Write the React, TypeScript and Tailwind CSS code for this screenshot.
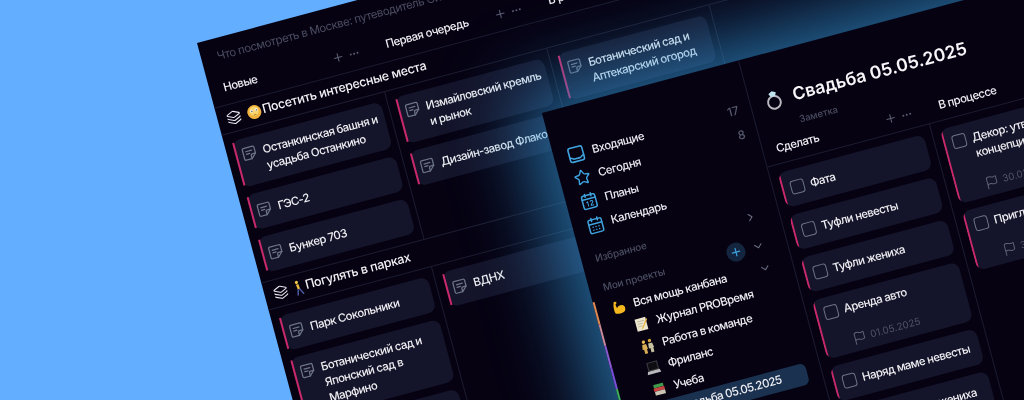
import React from "react";
import { CalendarDays, ChevronDown, ChevronRight, Ellipsis, Flag, Layers, Plus, Star } from "lucide-react";

const Note = () => (
  <svg width="16" height="16" viewBox="0 0 24 24" fill="none" stroke="#6d7488" strokeWidth="1.900" strokeLinecap="round" strokeLinejoin="round" className="shrink-0">
    <path d="M14 21H5a2 2 0 0 1-2-2V5a2 2 0 0 1 2-2h14a2 2 0 0 1 2 2v9l-7 7Z" />
    <path d="M14 21v-5a2 2 0 0 1 2-2h5" />
    <path d="M7.500 8.500h9M7.500 12.500h5" />
  </svg>
);

const Inbox = () => (
  <svg width="19" height="19" viewBox="0 0 24 24" fill="none" stroke="#3ea3de" strokeWidth="2" strokeLinecap="round" strokeLinejoin="round" className="shrink-0">
    <rect x="3" y="3" width="18" height="18" rx="2.500" />
    <path d="M3 15c3 0 3.500 2.500 5.500 2.500h7c2 0 2.500-2.500 5.500-2.500" />
  </svg>
);

const Cal12 = () => (
  <svg width="18" height="18" viewBox="0 0 24 24" fill="none" stroke="#3ea3de" strokeWidth="2" strokeLinecap="round" strokeLinejoin="round" className="shrink-0">
    <rect x="3" y="4" width="18" height="18" rx="2.500" />
    <path d="M8 2v4M16 2v4M3 9h18" />
    <path d="M8 13.500l1.500-1v6M13 13c1-1.200 3.500-.8 3.500 1 0 1.500-3.500 2.500-3.500 4.500h3.500" strokeWidth="1.300" />
  </svg>
);

const Face = () => (
  <svg width="15" height="15" viewBox="0 0 16 16" className="shrink-0">
    <circle cx="8" cy="8" r="7.500" fill="#f0b23c" />
    <circle cx="8" cy="7" r="5" fill="#f8d469" />
    <circle cx="5.500" cy="6.500" r="1.700" fill="#f6efe0" />
    <circle cx="10.500" cy="6" r="1.700" fill="#f6efe0" />
    <circle cx="5.700" cy="6.800" r=".7" fill="#544" />
    <circle cx="10.700" cy="6.300" r=".7" fill="#544" />
    <path d="M6.500 11h3" stroke="#a9722a" strokeWidth="1" />
  </svg>
);

const Walker = () => (
  <svg width="11" height="16" viewBox="0 0 11 16" className="shrink-0">
    <circle cx="4" cy="2" r="1.600" fill="#f2c84e" />
    <path d="M3 4h2.500l.5 5H3.500z" fill="#e8b93d" />
    <path d="M4 9 2.500 15M5.500 9 8.500 15" stroke="#4a5a9c" strokeWidth="1.500" />
  </svg>
);

const Muscle = () => (
  <svg width="14" height="15" viewBox="0 0 14 15" className="shrink-0">
    <path d="M3.500 1 6 1.500 5.500 3.500 4.500 3.800 5 8c1.500-2 4.500-2.500 6.500-1.500 2 1 2 4.500.5 6-2 1.500-6.500 1.500-9.500.5C1.500 11 1.500 5 3.500 1Z" fill="#f2b81e" />
  </svg>
);

const Memo = () => (
  <svg width="14" height="15" viewBox="0 0 14 15" className="shrink-0">
    <rect x="1" y="1.500" width="11" height="12.500" fill="#ece6cf" />
    <path d="M3 4.500h7M3 7h5M3 9.500h4" stroke="#b8b29c" strokeWidth=".8" />
    <path d="M12.500 3 6.500 11l-1 2 2-1.200L13.500 4z" fill="#e2b53c" />
  </svg>
);

const People = () => (
  <svg width="14" height="15" viewBox="0 0 14 15" className="shrink-0">
    <circle cx="3.800" cy="2.500" r="1.700" fill="#e8b94e" />
    <circle cx="10" cy="2.500" r="1.700" fill="#dca83c" />
    <path d="M1.800 5h4l.7 5H5.500v4.500H2.500V10H1z" fill="#d9ad55" />
    <path d="M8 5h4l.9 5H12v4.500H9V10H7.500z" fill="#c7c0a0" />
  </svg>
);

const Laptop = () => (
  <svg width="15" height="15" viewBox="0 0 15 15" className="shrink-0">
    <rect x="2" y="1.500" width="11" height="9" fill="#3b3b40" />
    <rect x="3" y="2.500" width="9" height="7" fill="#0e0e12" />
    <path d="M1.500 10.500h12l1 3H.5z" fill="#b9b9bd" />
  </svg>
);

const Books = () => (
  <svg width="14" height="14" viewBox="0 0 14 14" className="shrink-0">
    <rect x="2" y="1.500" width="10" height="3.500" rx=".6" fill="#3f9a4c" />
    <rect x="1.500" y="5" width="11" height="3.500" rx=".6" fill="#c8423f" />
    <rect x="2" y="8.500" width="10.500" height="4" rx=".6" fill="#c9c4b4" />
  </svg>
);

const Ring = ({ size = 18 }: { size?: number }) => (
  <svg width={size} height={size + 2} viewBox="0 0 18 20" fill="none" className="shrink-0">
    <ellipse cx="8.500" cy="12.500" rx="5.800" ry="5.800" stroke="#b9b9c0" strokeWidth="1.800" />
    <path d="M8.500 2 12 4 10.500 7h-4L5 4z" fill="#bfe4ee" />
  </svg>
);

const Bar = () => <span className="absolute left-0 top-[2px] bottom-[2px] w-[2px] bg-[#c9296a]" />;

function NoteCard({ lines, tall }: { lines: string[]; tall?: boolean }) {
  return (
    <div className={`relative flex items-start gap-[6px] rounded-lg bg-[#14142a] pl-[6px] pr-2 text-[11.500px] leading-4 font-medium tracking-[-0.05em] text-[#eeeef2] ${tall ? "py-2" : "py-[10px]"}`}>
      <Bar />
      <Note />
      <div>
        {lines.map((l) => (
          <div key={l} className="whitespace-nowrap">{l}</div>
        ))}
      </div>
    </div>
  );
}

function TaskCard({ lines, date }: { lines: string[]; date?: string }) {
  return (
    <div className={`relative flex items-start gap-[6px] overflow-hidden rounded-lg bg-[#14142a] pl-[9px] pr-2 text-[11.500px] leading-4 font-medium tracking-[-0.05em] text-[#eeeef2] ${date ? "pt-2 pb-[5px]" : "py-[10px]"}`}>
      <Bar />
      <span className="mt-[1px] size-[14px] shrink-0 rounded-[3px] border border-[#6d7488]" />
      <div>
        {lines.map((l) => (
          <div key={l} className="whitespace-nowrap">{l}</div>
        ))}
        {date && (
          <div className="mt-4 flex h-4 items-center gap-[3px] pl-[1px] text-[9.800px] font-normal tracking-normal text-[#4f5368]">
            <Flag size={14} strokeWidth={1.700} className="shrink-0 text-[#5d6378]" />
            <span className="ml-[1px]">{date}</span>
          </div>
        )}
      </div>
    </div>
  );
}

function ColHead({ name, actions = true, w }: { name: string; actions?: boolean; w: string }) {
  return (
    <div className={`flex items-center justify-between pl-[14px] pr-[13px] text-[11.500px] font-medium tracking-[-0.05em] text-[#eeeef2] ${w}`}>
      <span>{name}</span>
      {actions && (
        <span className="flex items-center gap-[4px] text-[#5b5f72]">
          <Plus size={13} />
          <Ellipsis size={12} />
        </span>
      )}
    </div>
  );
}

function Lane({ icon, title, cols }: { icon: React.ReactNode; title: string; cols: React.ReactNode[] }) {
  return (
    <section>
      <div className="flex h-[29px] items-center border-y border-[#1c1c30] pl-[9px] text-[12.500px] font-medium tracking-[-0.025em] text-[#f2f2f5]">
        <Layers size={15} strokeWidth={1.700} className="mr-[6px] shrink-0 text-[#e8e8ee]" />
        {icon}
        <span className="ml-[1px] whitespace-nowrap">{title}</span>
      </div>
      <div className="flex">
        {cols.map((c, i) => (
          <div key={i} className={`flex w-[168px] shrink-0 flex-col gap-2 pt-2 pb-2 pl-2 pr-[6px] ${i ? "border-l border-[#1c1c30]" : ""}`}>
            {c}
          </div>
        ))}
      </div>
    </section>
  );
}

function NavRow({ icon, label, count }: { icon: React.ReactNode; label: string; count?: string }) {
  return (
    <div className="flex h-[24.500px] items-center gap-[7px] pl-[13px] pr-[12px] text-[11.500px] font-medium tracking-[-0.05em] text-[#e8e8ee]">
      <span className="flex w-[19px] justify-center">{icon}</span>
      <span className="flex-1">{label}</span>
      {count && <span className="text-[12px] tracking-normal text-[#565a6e]">{count}</span>}
    </div>
  );
}

function ProjectRow({ icon, label, edge, nested = true, active, chevron }: { icon: React.ReactNode; label: string; edge: string; nested?: boolean; active?: boolean; chevron?: boolean }) {
  return (
    <div className={`flex h-[22.500px] items-center border-l-2 pr-4 text-[11.500px] font-medium tracking-[-0.05em] text-[#eeeef2] ${edge}`}>
      <div className={`flex h-full flex-1 items-center gap-2 ${nested ? "pl-[32px]" : "pl-[14px]"} ${active ? "ml-[24px] !pl-[8px] rounded-md bg-[#1a3150] -mr-[2px]" : ""}`}>
        <span className="flex w-[15px] shrink-0 justify-center">{icon}</span>
        <span className="flex-1 whitespace-nowrap">{label}</span>
        {chevron && <ChevronDown size={13} className="mr-[5px] text-[#6a6e80]" />}
      </div>
    </div>
  );
}

export default function App() {
  return (
    <div className="relative h-[400px] w-[1024px] overflow-hidden bg-[#64aeff] font-['Inter',sans-serif] blur-[0.4px]">
      <div className="absolute left-[197px] top-[43px] h-0 w-0 origin-top-left rotate-[-15deg]">
        {/* back window */}
        <div className="absolute left-0 top-0 h-[640px] w-[1060px] bg-[#060212]">
          <div className="flex h-[34px] items-center whitespace-nowrap pl-4 pt-1 text-[11.500px] tracking-[-0.04em] text-[#4b4d62]">
            Что посмотреть в Москве: путеводитель Сила и красота
          </div>
          <div className="flex h-[33px]">
            <ColHead name="Новые" w="w-[168px]" />
            <ColHead name="Первая очередь" w="w-[168px]" />
            <ColHead name="В работе" w="w-[168px]" />
          </div>
          <Lane
            icon={<Face />}
            title="Посетить интересные места"
            cols={[
              <>
                <NoteCard tall lines={["Останкинская башня и", "усадьба Останкино"]} />
                <NoteCard lines={["ГЭС-2"]} />
                <NoteCard lines={["Бункер 703"]} />
              </>,
              <>
                <NoteCard tall lines={["Измайловский кремль", "и рынок"]} />
                <NoteCard lines={["Дизайн-завод Флакон"]} />
              </>,
              <NoteCard tall lines={["Ботанический сад и", "Аптекарский огород"]} />,
              <span />,
            ]}
          />
          <Lane
            icon={<Walker />}
            title="Погулять в парках"
            cols={[
              <>
                <NoteCard lines={["Парк Сокольники"]} />
                <NoteCard tall lines={["Ботанический сад и", "Японский сад в", "Марфино"]} />
                <NoteCard lines={["Парк Горького"]} />
              </>,
              <NoteCard lines={["ВДНХ"]} />,
              <span />,
              <span />,
            ]}
          />
        </div>

        {/* front window */}
        <div className="absolute left-[315px] top-[157px] flex h-[520px] w-[760px] bg-[#060212] shadow-[0_0_75px_22px_rgba(50,150,215,0.68)]">
          <aside className="w-[204px] shrink-0 border-r border-[#1c1c30]">
            <div className="pt-[36px]">
              <NavRow icon={<Inbox />} label="Входящие" count="17" />
              <NavRow icon={<Star size={17} strokeWidth={2} className="text-[#3ea3de]" />} label="Сегодня" count="8" />
              <NavRow icon={<Cal12 />} label="Планы" />
              <NavRow icon={<CalendarDays size={18} strokeWidth={2} className="text-[#3ea3de]" />} label="Календарь" />
            </div>
            <div className="mt-2 flex h-6 items-center justify-between pl-[14px] pr-[22px] text-[10px] font-medium tracking-[-0.02em] text-[#4b4f63]">
              <span>Избранное</span>
              <ChevronRight size={13} className="text-[#6a6e80]" />
            </div>
            <div className="mt-[6px] flex h-6 items-center pl-[14px] pr-[22px] text-[10px] font-medium tracking-[-0.02em] text-[#4b4f63]">
              <span className="flex-1">Мои проекты</span>
              <span className="mr-[7px] flex size-[19px] items-center justify-center rounded-full bg-[#14263f]">
                <Plus size={13} strokeWidth={2.200} className="text-[#3ea3de]" />
              </span>
              <ChevronDown size={13} className="text-[#6a6e80]" />
            </div>
            <div>
              <ProjectRow nested={false} chevron edge="border-[#e08a52]" icon={<Muscle />} label="Вся мощь канбана" />
              <ProjectRow edge="border-[#c88a9a]" icon={<Memo />} label="Журнал PROBремя" />
              <ProjectRow edge="border-[#8a5ad0]" icon={<People />} label="Работа в команде" />
              <ProjectRow edge="border-[#7a4fd8]" icon={<Laptop />} label="Фриланс" />
              <ProjectRow edge="border-[#3fae5a]" icon={<Books />} label="Учеба" />
              <ProjectRow active edge="border-[#3fae5a]" icon={<Ring />} label="Свадьба 05.05.2025" />
            </div>
          </aside>

          <main className="flex-1">
            <div className="flex items-center gap-[9px] pl-[14px] pt-[35px] text-[17.600px] leading-6 font-semibold text-[#f6f6f8]">
              <Ring size={20} />
              <span>Свадьба 05.05.2025</span>
            </div>
            <div className="mt-[6px] pl-[43px] text-[9.500px] leading-4 font-medium text-[#4b4d62]">Заметка</div>
            <div className="flex h-[30px] items-center border-b border-[#1c1c30]">
              <ColHead name="Сделать" w="w-[167px] !pl-[13px]" />
              <ColHead name="В процессе" w="w-[167px]" />
            </div>
            <div className="flex">
              <div className="flex w-[167px] shrink-0 flex-col gap-2 p-2">
                <TaskCard lines={["Фата"]} />
                <TaskCard lines={["Туфли невесты"]} />
                <TaskCard lines={["Туфли жениха"]} />
                <TaskCard lines={["Аренда авто"]} date="01.05.2025" />
                <TaskCard lines={["Наряд маме невесты"]} />
                <TaskCard lines={["Наряд маме жениха"]} />
              </div>
              <div className="flex w-[167px] shrink-0 flex-col gap-2 border-l border-[#1c1c30] p-2">
                <TaskCard lines={["Декор: утвердить", "концепцию"]} date="30.03.2025" />
                <TaskCard lines={["Пригласительные"]} date="30.03.2025" />
              </div>
            </div>
          </main>
        </div>
      </div>
    </div>
  );
}
